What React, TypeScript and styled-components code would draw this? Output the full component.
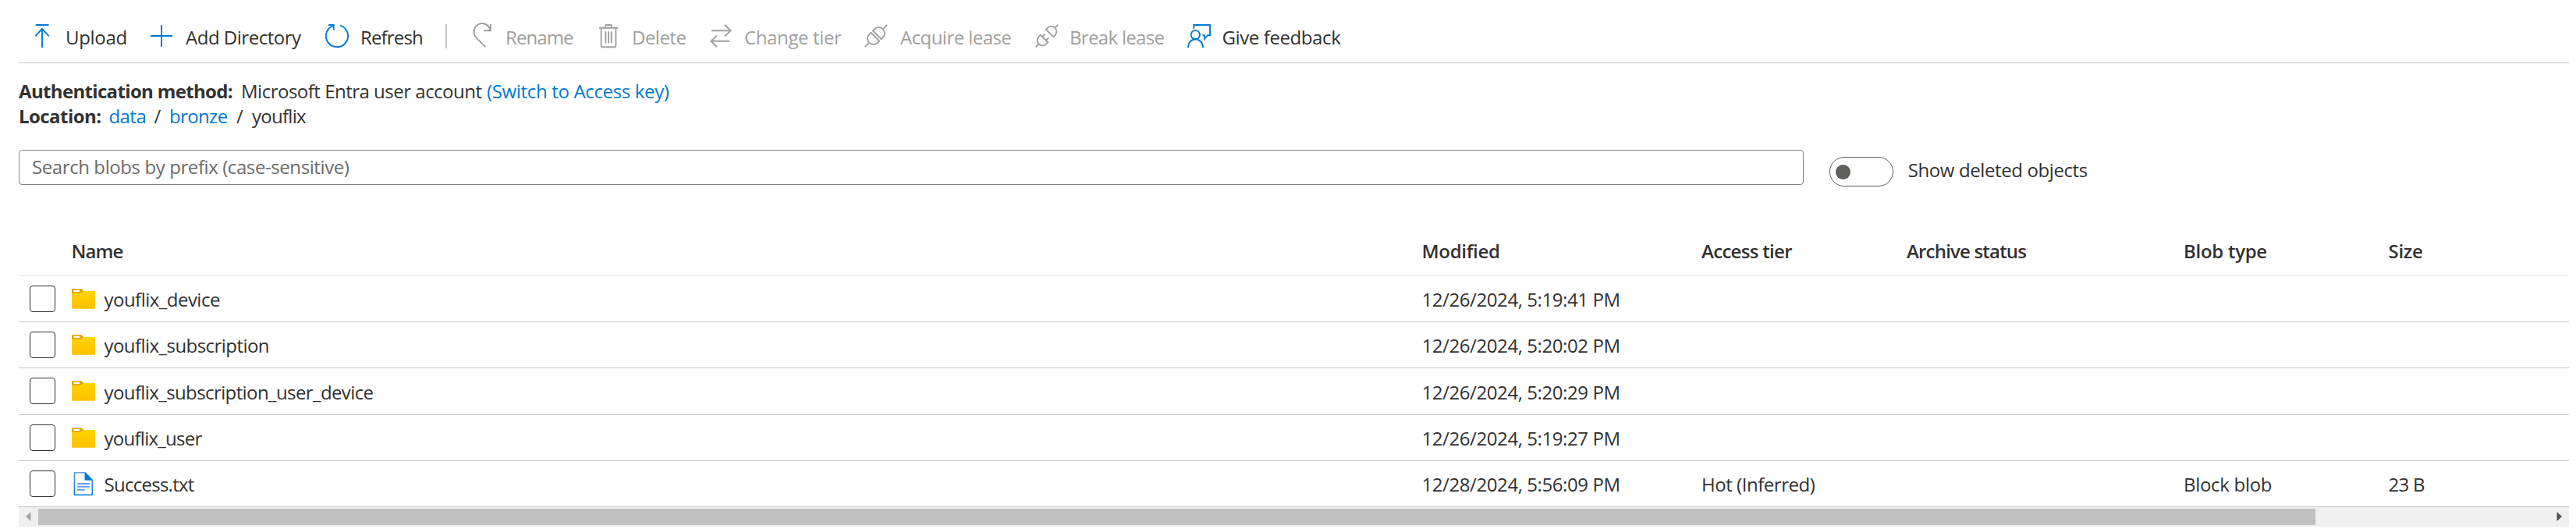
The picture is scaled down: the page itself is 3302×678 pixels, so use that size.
import React from 'react';
import styled, { createGlobalStyle } from 'styled-components';

const GlobalStyle = createGlobalStyle`
  body {
    margin: 0;
    background: #fff;
    color: #323130;
    font-family: 'Open Sans', 'Noto Sans', sans-serif;
    font-size: 24px;
    overflow: hidden;
  }
  * { box-sizing: border-box; }
`;

const Page = styled.main`
  height: 678px;
  padding: 12px 9px 0 24px;
  overflow: hidden;
`;

const Toolbar = styled.div`
  display: flex;
  align-items: center;
  height: 69px;
  padding-left: 15px;
  border-bottom: 1px solid #cccac8;
`;

const ToolButton = styled.button<{ $width: number; $gap: number; $muted?: boolean }>`
  display: flex;
  flex: none;
  align-items: center;
  gap: ${(p) => p.$gap}px;
  width: ${(p) => p.$width}px;
  height: 68px;
  padding: 0;
  border: 0;
  background: none;
  font: inherit;
  color: ${(p) => (p.$muted ? '#a19f9d' : '#323130')};
`;

const Icon = styled.svg<{ $color?: string }>`
  display: block;
  flex: none;
  width: 30px;
  height: 30px;
  overflow: visible;
  fill: none;
  stroke: ${(p) => p.$color ?? 'none'};
  stroke-width: 1.9;
`;

const Label = styled.span<{ $spacing: number }>`
  padding-top: 3px;
  line-height: 32px;
  white-space: nowrap;
  letter-spacing: ${(p) => p.$spacing}px;
`;

const Divider = styled.span`
  flex: none;
  width: 2px;
  height: 31px;
  margin-right: 30px;
  background: #c8c6c4;
`;

const Info = styled.section`
  padding-top: 20px;
`;

const InfoLine = styled.div`
  display: flex;
  height: 32px;
  line-height: 32px;
  white-space: nowrap;
`;

const Part = styled.span<{ $width?: number; $spacing?: number; $bold?: boolean }>`
  flex: none;
  width: ${(p) => (p.$width ? `${p.$width}px` : 'auto')};
  font-weight: ${(p) => (p.$bold ? 700 : 400)};
  letter-spacing: ${(p) => p.$spacing ?? 0}px;
`;

const LinkPart = styled(Part)`
  color: #0078d4;
`;

const SearchRow = styled.div`
  display: flex;
  align-items: flex-start;
  height: 47px;
  margin-top: 27px;
`;

const SearchInput = styled.input`
  width: 2288px;
  height: 45px;
  padding: 0 16px 2px;
  border: 1px solid #85827f;
  border-radius: 4px;
  outline: 0;
  font: inherit;
  letter-spacing: -0.41px;
  &::placeholder { color: #6c6a68; opacity: 1; }
`;

const Toggle = styled.span`
  display: flex;
  align-items: center;
  width: 82px;
  height: 38px;
  margin: 9px 18.7px 0 33px;
  padding-left: 7px;
  border: 1px solid #605e5c;
  border-radius: 19px;
`;

const Knob = styled.span`
  width: 19px;
  height: 19px;
  border-radius: 50%;
  background: #605e5c;
`;

const ToggleLabel = styled.span`
  padding-top: 9px;
  line-height: 33px;
  letter-spacing: -0.39px;
`;

const Grid = styled.div`
  margin-top: 49px;
`;

const Row = styled.div<{ $head?: boolean }>`
  display: grid;
  grid-template-columns: 67.5px 1731px 358.5px 263px 355px 262.5px 1fr;
  align-items: center;
  height: ${(p) => (p.$head ? 66 : 59.2)}px;
  border-bottom: 1px solid ${(p) => (p.$head ? '#e6e5e4' : '#c6c5c4')};
  font-weight: ${(p) => (p.$head ? 600 : 400)};
`;

const Cell = styled.span<{ $spacing?: number }>`
  padding-top: 2.4px;
  line-height: 32px;
  white-space: nowrap;
  letter-spacing: ${(p) => p.$spacing ?? 0}px;
`;

const NameCell = styled.span`
  display: flex;
  align-items: center;
  gap: 12px;
`;

const Checkbox = styled.span`
  width: 33px;
  height: 34px;
  margin-left: 14px;
  border: 1px solid #323130;
  border-radius: 4px;
`;

const Scrollbar = styled.div`
  display: flex;
  align-items: center;
  height: 25px;
  background: #f0f0f0;
`;

const Thumb = styled.span`
  width: 2919px;
  height: 21px;
  background: #c1c1c1;
`;

const Arrow = styled.svg<{ $push?: boolean }>`
  display: block;
  width: 7px;
  height: 12px;
  margin: ${(p) => (p.$push ? '0 9px 0 auto' : '0 9px')};
`;

const BLUE = '#0078d4';
const GREY = '#a19f9d';

const UploadIcon = () => (
  <Icon viewBox="0 0 30 30" $color={BLUE}>
    <path d="M6.7 1H23.6M15 30V6M6.3 15.3L15 6L23.7 15.3" />
  </Icon>
);
const AddIcon = () => (
  <Icon viewBox="0 0 30 30" $color={BLUE}>
    <path d="M15 1V29M1 15H29" />
  </Icon>
);
const RefreshIcon = () => (
  <Icon viewBox="0 0 30 30" $color={BLUE}>
    <path d="M19 1.6A14.1 14.1 0 1 1 10.3 1.8M4 1H10.7V7.4" />
  </Icon>
);
const RenameIcon = () => (
  <Icon viewBox="0 0 30 30" $color={GREY}>
    <path d="M25.3 8A10.2 10.2 0 0 0 4.6 11C4.6 14 5.8 15.6 8 17.8L19.3 29.3M25.8 0V8.2H17" />
  </Icon>
);
const DeleteIcon = () => (
  <Icon viewBox="0 0 30 30" $color={GREY}>
    <path d="M3 4.8H27M11 4.5V2Q11 1 12 1H18Q19 1 19 2V4.5M5.6 5V27.6Q5.6 29.2 7.2 29.2H22.8Q24.4 29.2 24.4 27.6V5M11.3 9.3V24.5M15 9.3V24.5M18.7 9.3V24.5" />
  </Icon>
);
const TierIcon = () => (
  <Icon viewBox="0 0 30 30" $color={GREY}>
    <path d="M3 8.3H27.5M20 .8L27.6 8.3L20 15.6M26.3 21.7H2.2M10 14.6L2.4 21.7L10 29.2" />
  </Icon>
);
const AcquireIcon = () => (
  <Icon viewBox="0 0 30 30" $color={GREY}>
    <g transform="translate(15 15) rotate(-45)">
      <path d="M-1.7 -7.6H-4.6C-9.6 -7.6 -12.3 -4 -12.3 0S-9.6 7.6 -4.6 7.6H-1.7ZM1.7 -7.6H4.6C9.6 -7.6 12.3 -4 12.3 0S9.6 7.6 4.6 7.6H1.7ZM-12.3 0H-20M12.3 0H20" />
    </g>
  </Icon>
);
const BreakIcon = () => (
  <Icon viewBox="0 0 30 30" $color={GREY}>
    <g transform="translate(15 15) rotate(-45)">
      <path d="M-5 -6.7H-7.6C-12 -6.7 -14.6 -3.6 -14.6 0S-12 6.7 -7.6 6.7H-5ZM5 -6.7H7.6C12 -6.7 14.6 -3.6 14.6 0S12 6.7 7.6 6.7H5ZM-14.6 0H-20.4M14.6 0H20.4M-5 -3.2H0M-5 3.2H0" />
    </g>
  </Icon>
);
const FeedbackIcon = () => (
  <Icon viewBox="0 0 30 30" $color={BLUE}>
    <circle cx="10.3" cy="13.6" r="5.7" />
    <path d="M1 30C1 23.5 5 19.4 10.3 19.4S20 23.5 20 30M8.3 5.8V1H29V14.2H26.2L22 18.8V14.2H19.6" />
  </Icon>
);

const FolderIcon = () => (
  <Icon viewBox="0 0 30 30">
    <defs>
      <linearGradient id="folder" x1="0" y1="0" x2="0" y2="1">
        <stop offset="0" stopColor="#ffd400" />
        <stop offset="1" stopColor="#ffc000" />
      </linearGradient>
    </defs>
    <path fill="#dfa500" d="M0 3.1Q0 2.3 .8 2.3H11.6Q12.5 2.3 13.2 3L15.4 5L13 8H0Z" />
    <path fill="url(#folder)" d="M0 7.7H10.6Q11.8 7.7 12.7 7L15 5H29.2Q30 5 30 5.8V27Q30 27.7 29.2 27.7H.8Q0 27.7 0 27Z" />
    <rect x="2.4" y="4" width="7.6" height="2" rx=".5" fill="#fff" />
  </Icon>
);
const FileIcon = () => (
  <Icon viewBox="0 0 30 30">
    <defs>
      <linearGradient id="page" x1="0" y1="0" x2="0" y2="1">
        <stop offset="0" stopColor="#5ea0ef" />
        <stop offset="1" stopColor="#0078d4" />
      </linearGradient>
    </defs>
    <path fill="url(#page)" d="M3.6 0H17.5L27 10V29Q27 30 26 30H3.6Q2.6 30 2.6 29V1Q2.6 0 3.6 0Z" />
    <path fill="#fff" d="M4.3 1.6H16.4V10.6H25.5V28.4H4.3Z" />
    <path fill="#0078d4" d="M17 0L27 10.4H18.2Q17 10.4 17 9.2Z" />
    <path stroke="#5ea0ef" strokeWidth="2" strokeLinecap="round" d="M7.6 15H22.2M7.6 18.8H22.2M7.6 22.8H15.8" />
  </Icon>
);

type Tool = { label: string; icon: React.FC; width: number; gap: number; spacing: number; muted?: boolean };

const startTools: Tool[] = [
  { label: 'Upload', icon: UploadIcon, width: 153, gap: 15, spacing: -0.32 },
  { label: 'Add Directory', icon: AddIcon, width: 225, gap: 16, spacing: -0.48 },
  { label: 'Refresh', icon: RefreshIcon, width: 154, gap: 15, spacing: -0.85 },
];

const blobTools: Tool[] = [
  { label: 'Rename', icon: RenameIcon, width: 162, gap: 15, spacing: -0.9, muted: true },
  { label: 'Delete', icon: DeleteIcon, width: 144, gap: 15, spacing: -0.52, muted: true },
  { label: 'Change tier', icon: TierIcon, width: 199, gap: 15, spacing: -0.36, muted: true },
  { label: 'Acquire lease', icon: AcquireIcon, width: 219, gap: 16, spacing: -0.55, muted: true },
  { label: 'Break lease', icon: BreakIcon, width: 195, gap: 14, spacing: -0.68, muted: true },
  { label: 'Give feedback', icon: FeedbackIcon, width: 210, gap: 14.5, spacing: -0.4 },
];

const ToolItem = ({ tool }: { tool: Tool }) => (
  <ToolButton $width={tool.width} $gap={tool.gap} $muted={tool.muted} disabled={tool.muted}>
    <tool.icon />
    <Label $spacing={tool.spacing}>{tool.label}</Label>
  </ToolButton>
);

const rows = [
  { name: 'youflix_device', spacing: -0.52, modified: '12/26/2024, 5:19:41 PM' },
  { name: 'youflix_subscription', spacing: -0.55, modified: '12/26/2024, 5:20:02 PM' },
  { name: 'youflix_subscription_user_device', spacing: -0.6, modified: '12/26/2024, 5:20:29 PM' },
  { name: 'youflix_user', spacing: -0.73, modified: '12/26/2024, 5:19:27 PM' },
  { name: 'Success.txt', spacing: -0.73, modified: '12/28/2024, 5:56:09 PM', file: true, tier: 'Hot (Inferred)', type: 'Block blob', size: '23 B' },
];

export default function App() {
  return (
    <>
      <GlobalStyle />
      <Page>
        <Toolbar>
          {startTools.map((t) => <ToolItem key={t.label} tool={t} />)}
          <Divider />
          {blobTools.map((t) => <ToolItem key={t.label} tool={t} />)}
        </Toolbar>

        <Info>
          <InfoLine>
            <Part $bold $width={285} $spacing={-0.66}>Authentication method:</Part>
            <Part $width={315} $spacing={-0.5}>Microsoft Entra user account</Part>
            <LinkPart $spacing={-0.34}>(Switch to Access key)</LinkPart>
          </InfoLine>
          <InfoLine>
            <Part $bold $width={115.4} $spacing={-0.55}>Location:</Part>
            <LinkPart $width={58} $spacing={-0.52}>data</LinkPart>
            <Part $width={19.6}>/</Part>
            <LinkPart $width={86} $spacing={-0.64}>bronze</LinkPart>
            <Part $width={20}>/</Part>
            <Part $spacing={-0.73}>youflix</Part>
          </InfoLine>
        </Info>

        <SearchRow>
          <SearchInput placeholder="Search blobs by prefix (case-sensitive)" />
          <Toggle><Knob /></Toggle>
          <ToggleLabel>Show deleted objects</ToggleLabel>
        </SearchRow>

        <Grid>
          <Row $head>
            <span />
            <Cell $spacing={-0.91}>Name</Cell>
            <Cell $spacing={-0.3}>Modified</Cell>
            <Cell $spacing={-0.7}>Access tier</Cell>
            <Cell $spacing={-0.81}>Archive status</Cell>
            <Cell $spacing={-0.28}>Blob type</Cell>
            <Cell $spacing={-0.26}>Size</Cell>
          </Row>
          {rows.map((r) => (
            <Row key={r.name}>
              <Checkbox />
              <NameCell>
                {r.file ? <FileIcon /> : <FolderIcon />}
                <Cell $spacing={r.spacing}>{r.name}</Cell>
              </NameCell>
              <Cell $spacing={-0.42}>{r.modified}</Cell>
              <Cell $spacing={-0.46}>{r.tier}</Cell>
              <span />
              <Cell $spacing={-0.3}>{r.type}</Cell>
              <Cell $spacing={-0.7}>{r.size}</Cell>
            </Row>
          ))}
        </Grid>

        <Scrollbar>
          <Arrow viewBox="0 0 7 12"><path d="M6.5 0V12L0 6Z" fill="#a3a3a3" /></Arrow>
          <Thumb />
          <Arrow $push viewBox="0 0 7 12"><path d="M.5 0V12L7 6Z" fill="#505050" /></Arrow>
        </Scrollbar>
      </Page>
    </>
  );
}
